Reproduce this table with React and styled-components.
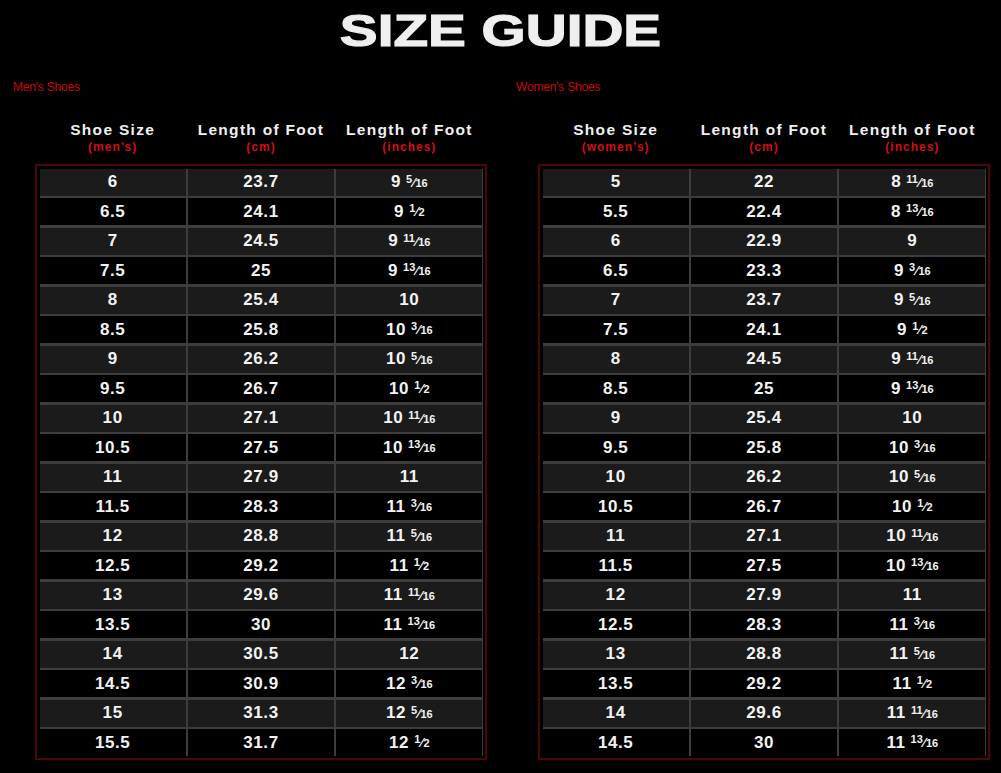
import React from "react";
import styled, { createGlobalStyle } from "styled-components";

const Global = createGlobalStyle`
  html, body { margin: 0; padding: 0; background: #000; }
  body { font-family: "Liberation Sans", Arial, sans-serif; color: #f2f2f2; }
  #root { width: 1001px; min-height: 773px; background: #000; }
`;

const Page = styled.div`
  width: 1001px;
  height: 773px;
  background: #000;
  overflow: hidden;
`;

const TitleBar = styled.h1`
  margin: 0;
  padding-top: 8px;
  height: 45px;
  display: flex;
  justify-content: center;
  font-size: 45px;
  line-height: 45px;
  font-weight: 700;
`;

const TitleText = styled.span`
  display: inline-block;
  color: #efefef;
  letter-spacing: 0;
  -webkit-text-stroke: 1.2px #efefef;
  transform: scaleX(1.26);
  transform-origin: center;
`;

const Columns = styled.div`
  display: grid;
  grid-template-columns: 503px 498px;
`;

const Panel = styled.section`
  padding-left: 13px;
  padding-top: 27px;
`;

const Label = styled.div`
  color: #c80808;
  font-size: 12px;
  line-height: 14px;
  letter-spacing: -0.2px;
`;

const Table = styled.div`
  margin-left: 22px;
  width: 452px;
  box-sizing: border-box;
`;

const HeadRow = styled.div`
  display: grid;
  grid-template-columns: repeat(3, 1fr);
  column-gap: 2px;
  padding: 0 4.5px;
  margin-top: 27px;
  text-align: center;
`;

const HeadMain = styled.div`
  font-size: 15.5px;
  line-height: 18px;
  font-weight: 700;
  letter-spacing: 1.3px;
  color: #f0f0f0;
  white-space: nowrap;
`;

const HeadSub = styled.div`
  font-size: 12px;
  line-height: 16px;
  font-weight: 700;
  letter-spacing: 1px;
  color: #d10f0f;
`;

const Frame = styled.div`
  margin-top: 9px;
  border: 2px solid #450b0b;
  box-shadow: 0 0 2px #2a0505;
  padding: 2.5px 2.5px 1.5px;
  background: #000;
`;

const Grid = styled.div`
  display: grid;
  grid-template-columns: repeat(3, 1fr);
  column-gap: 2px;
  row-gap: 2.5px;
  background: #3d3d3d;
`;

const Cell = styled.div`
  height: 27px;
  display: flex;
  align-items: center;
  justify-content: center;
  background: ${(p) => (p.$alt ? "#1b1b1b" : "#000")};
  font-size: 17px;
  font-weight: 700;
  letter-spacing: 0.6px;
  color: #f3f3f3;
  white-space: nowrap;
`;

const Frac = styled.span`
  display: inline-flex;
  align-items: baseline;
  margin-left: 5px;
  font-size: 11px;
  letter-spacing: 0;
`;

const Num = styled.span`
  position: relative;
  top: -4px;
`;

const Slash = styled.span`
  font-size: 13px;
  margin: 0 0.5px;
`;

const men = [
  ["6", "23.7", "9 5/16"],
  ["6.5", "24.1", "9 1/2"],
  ["7", "24.5", "9 11/16"],
  ["7.5", "25", "9 13/16"],
  ["8", "25.4", "10"],
  ["8.5", "25.8", "10 3/16"],
  ["9", "26.2", "10 5/16"],
  ["9.5", "26.7", "10 1/2"],
  ["10", "27.1", "10 11/16"],
  ["10.5", "27.5", "10 13/16"],
  ["11", "27.9", "11"],
  ["11.5", "28.3", "11 3/16"],
  ["12", "28.8", "11 5/16"],
  ["12.5", "29.2", "11 1/2"],
  ["13", "29.6", "11 11/16"],
  ["13.5", "30", "11 13/16"],
  ["14", "30.5", "12"],
  ["14.5", "30.9", "12 3/16"],
  ["15", "31.3", "12 5/16"],
  ["15.5", "31.7", "12 1/2"],
];

const women = [
  ["5", "22", "8 11/16"],
  ["5.5", "22.4", "8 13/16"],
  ["6", "22.9", "9"],
  ["6.5", "23.3", "9 3/16"],
  ["7", "23.7", "9 5/16"],
  ["7.5", "24.1", "9 1/2"],
  ["8", "24.5", "9 11/16"],
  ["8.5", "25", "9 13/16"],
  ["9", "25.4", "10"],
  ["9.5", "25.8", "10 3/16"],
  ["10", "26.2", "10 5/16"],
  ["10.5", "26.7", "10 1/2"],
  ["11", "27.1", "10 11/16"],
  ["11.5", "27.5", "10 13/16"],
  ["12", "27.9", "11"],
  ["12.5", "28.3", "11 3/16"],
  ["13", "28.8", "11 5/16"],
  ["13.5", "29.2", "11 1/2"],
  ["14", "29.6", "11 11/16"],
  ["14.5", "30", "11 13/16"],
];

function Inches({ value }) {
  const [whole, frac] = value.split(" ");
  if (!frac) return <>{whole}</>;
  const [n, d] = frac.split("/");
  return (
    <>
      {whole}
      <Frac>
        <Num>{n}</Num>
        <Slash>⁄</Slash>
        <span>{d}</span>
      </Frac>
    </>
  );
}

function SizeTable({ label, who, rows }) {
  return (
    <Panel>
      <Label>{label}</Label>
      <Table>
        <HeadRow>
          <div>
            <HeadMain>Shoe Size</HeadMain>
            <HeadSub>({who})</HeadSub>
          </div>
          <div>
            <HeadMain>Length of Foot</HeadMain>
            <HeadSub>(cm)</HeadSub>
          </div>
          <div>
            <HeadMain>Length of Foot</HeadMain>
            <HeadSub>(inches)</HeadSub>
          </div>
        </HeadRow>
        <Frame>
          <Grid>
            {rows.map((r, i) => (
              <React.Fragment key={i}>
                <Cell $alt={i % 2 === 0}>{r[0]}</Cell>
                <Cell $alt={i % 2 === 0}>{r[1]}</Cell>
                <Cell $alt={i % 2 === 0}>
                  <Inches value={r[2]} />
                </Cell>
              </React.Fragment>
            ))}
          </Grid>
        </Frame>
      </Table>
    </Panel>
  );
}

export default function App() {
  return (
    <Page>
      <Global />
      <TitleBar>
        <TitleText>SIZE GUIDE</TitleText>
      </TitleBar>
      <Columns>
        <SizeTable label="Men's Shoes" who="men’s" rows={men} />
        <SizeTable label="Women's Shoes" who="women’s" rows={women} />
      </Columns>
    </Page>
  );
}
